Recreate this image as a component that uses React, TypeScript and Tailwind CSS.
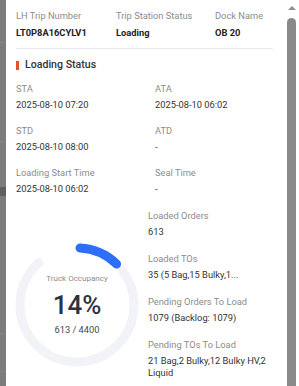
import React from 'react';

const Field = ({ label, value }: { label: string; value: React.ReactNode }) => (
  <div>
    <p className="text-[9.3px] leading-[12px] text-[#8c8c8c]">{label}</p>
    <p className="mt-[4px] text-[9.3px] leading-[12px] text-[#333333]">{value}</p>
  </div>
);

const OccupancyRing = () => (
  <div className="relative -ml-px h-[124px] w-[124px]">
    <svg width="124" height="124" viewBox="0 0 124 124">
      {/* track */}
      <path d="M106.9 26.9 A57 57 0 1 1 23.86 19.64" fill="none" stroke="#f2f3f8" strokeWidth="9" strokeLinecap="round" />
      {/* progress 14% */}
      <path d="M64.98 5.08 A57 57 0 0 1 101.6 21.0" fill="none" stroke="#2d6ff6" strokeWidth="9" strokeLinecap="round" />
    </svg>
    <div className="absolute inset-0 flex flex-col items-center pt-[31px]">
      <span className="text-[8px] leading-[10px] text-[#8c8c8c]">Truck Occupancy</span>
      <span className="mt-[6px] text-[26px] font-medium leading-[30px] text-[#2c333f]">14%</span>
      <span className="mt-[4px] text-[9.3px] leading-[12px] text-[#444a55]">613 / 4400</span>
    </div>
  </div>
);

export default function App() {
  return (
    <div className="flex h-[386px] w-[299px] overflow-hidden bg-white font-['Roboto',sans-serif]">
      {/* dimmed page behind the drawer */}
      <div className="flex w-[6px] flex-col bg-[#7c7c7c]">
        <div className="h-[42px]" />
        <div className="h-px bg-[#888888]" />
        <div className="h-[98px]" />
        <div className="h-px bg-[#868686]" />
        <div className="h-[45px]" />
        <div className="h-[9px] bg-[#5f5f5f]" />
        <div className="h-[137px]" />
        <div className="h-px bg-[#868686]" />
        <div className="h-[37px]" />
        <div className="h-px bg-[#868686]" />
      </div>

      {/* drawer content */}
      <div className="flex-1 px-[10px]">
        <div className="grid grid-cols-[100px_99px_1fr] border-b border-[#e6e9f0] pt-[10px] pb-[9px]">
          {[
            ['LH Trip Number', 'LT0P8A16CYLV1'],
            ['Trip Station Status', 'Loading'],
            ['Dock Name', 'OB 20'],
          ].map(([label, value]) => (
            <div key={label}>
              <p className="text-[9.3px] leading-[12px] text-[#8c8c8c]">{label}</p>
              <p className="mt-[5px] text-[9.3px] font-bold leading-[12px] text-[#222222]">{value}</p>
            </div>
          ))}
        </div>

        <div className="mt-[9px] flex items-center gap-[6px]">
          <span className="h-[9px] w-[3px] bg-[#ee4d2d]" />
          <h2 className="text-[10.6px] font-medium leading-[14px] text-[#333333]">Loading Status</h2>
        </div>

        <div className="mt-[11px] grid grid-cols-[139px_1fr] gap-y-[14px]">
          <Field label="STA" value="2025-08-10 07:20" />
          <Field label="ATA" value="2025-08-10 06:02" />
          <Field label="STD" value="2025-08-10 08:00" />
          <Field label="ATD" value="-" />
          <Field label="Loading Start Time" value="2025-08-10 06:02" />
          <Field label="Seal Time" value="-" />
        </div>

        <div className="mt-[15px] flex">
          <div className="w-[132px] pt-[33px]">
            <OccupancyRing />
          </div>
          <div className="flex w-[118px] flex-col gap-y-[15px]">
            <Field label="Loaded Orders" value="613" />
            <Field label="Loaded TOs" value="35 (5 Bag,15 Bulky,1..." />
            <Field label="Pending Orders To Load" value="1079 (Backlog: 1079)" />
            <Field label="Pending TOs To Load" value="21 Bag,2 Bulky,12 Bulky HV,2 Liquid" />
          </div>
        </div>
      </div>

      {/* scrollbar */}
      <div className="flex w-[16px] flex-col items-start pl-[4px]">
        <div className="mt-[6px] ml-[0.5px] h-0 w-0 border-x-[4px] border-b-[4px] border-x-transparent border-b-[#8f8f8f]" />
        <div className="mt-[8px] w-[9px] flex-1 rounded-t-full bg-[#8a8a8a]" />
      </div>
    </div>
  );
}
